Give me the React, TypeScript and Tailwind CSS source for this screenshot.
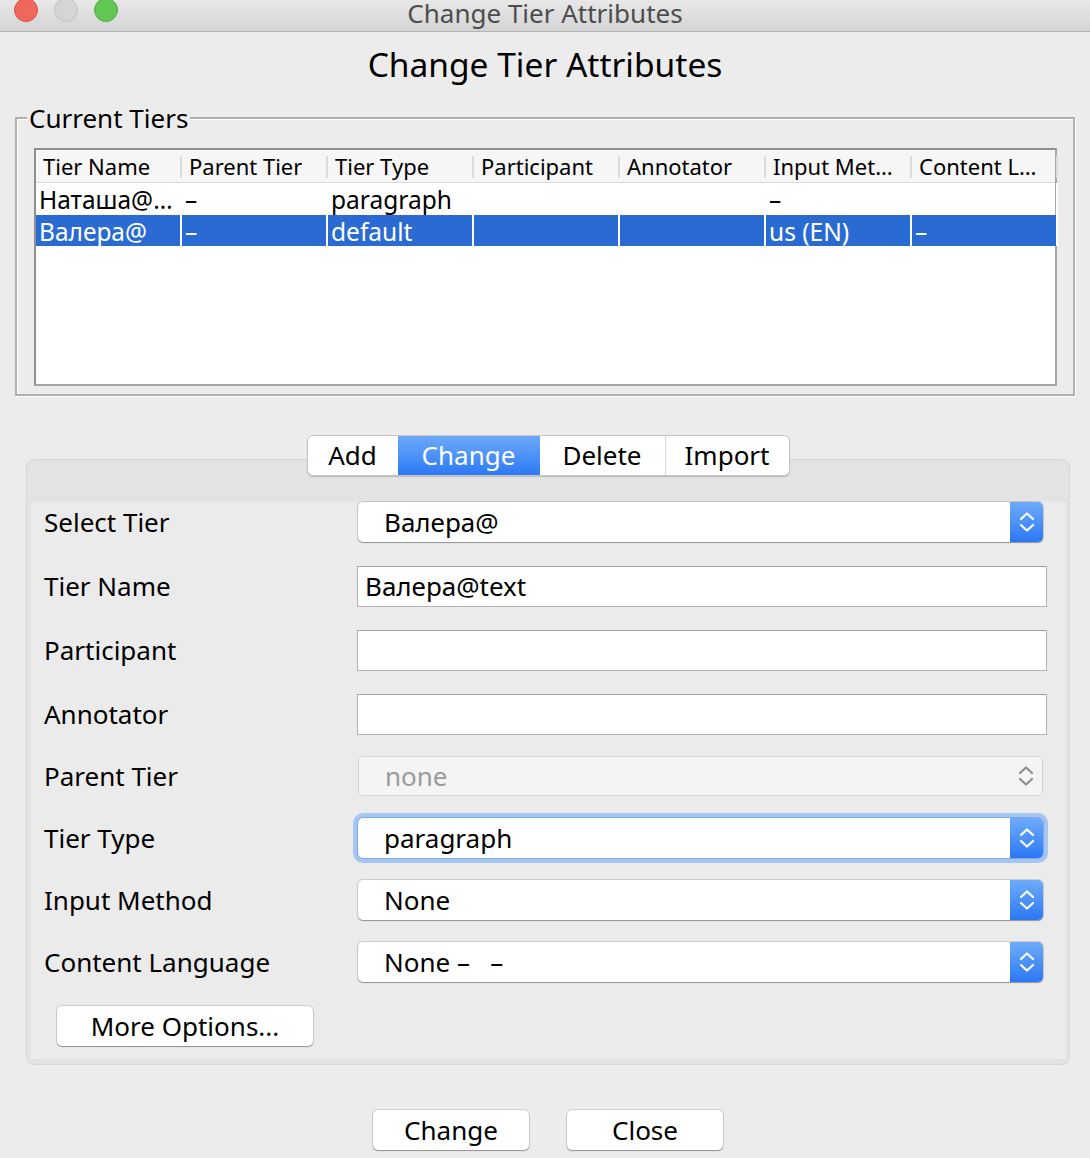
import React from "react";

const columns = [
  "Tier Name",
  "Parent Tier",
  "Tier Type",
  "Participant",
  "Annotator",
  "Input Met…",
  "Content L…",
];

const rows = [
  { cells: ["Наташа@…", "–", "paragraph", "", "", "–", ""], selected: false, h: "h-[32px]" },
  { cells: ["Валера@", "–", "default", "", "", "us (EN)", "–"], selected: true, h: "h-[31px]" },
];

const Chevrons = ({ color }: { color: string }) => (
  <svg width="16" height="24" viewBox="0 0 16 24" fill="none" stroke={color} strokeWidth="2.2" strokeLinecap="round" strokeLinejoin="round">
    <path d="M2 9 L8 3.5 L14 9" />
    <path d="M2 15 L8 20.5 L14 15" />
  </svg>
);

const Select = ({ value, disabled, focused }: { value: string; disabled?: boolean; focused?: boolean }) => {
  if (disabled) {
    return (
      <div className="ml-[1px] mr-[4px] flex h-[40px] items-center rounded-[5px] border border-[#d4d4d4] bg-[#f4f4f4]">
        <span className="flex-1 pl-[26px] text-[#9b9b9b]">{value}</span>
        <div className="flex w-[32px] items-center justify-center">
          <Chevrons color="#8d8d8d" />
        </div>
      </div>
    );
  }
  return (
    <div
      className={
        "ml-[1px] mr-[4px] flex h-[40px] items-center rounded-[5px] bg-white " +
        (focused
          ? "shadow-[0_0_0_1px_#7fa9e6,0_0_0_5px_#a4c6f1]"
          : "shadow-[0_0_0_1px_rgba(0,0,0,0.13),0_1px_1px_rgba(0,0,0,0.28)]")
      }
    >
      <span className="flex-1 whitespace-pre pl-[26px] text-black">{value}</span>
      <div className="flex h-full w-[33px] items-center justify-center rounded-r-[5px] bg-gradient-to-b from-[#6eabf9] to-[#2a77f4]">
        <Chevrons color="#ffffff" />
      </div>
    </div>
  );
};

const TextField = ({ value }: { value: string }) => (
  <div className="flex h-[41px] items-center border border-[#b3b3b3] border-t-[#a2a2a2] bg-white pl-[7px] text-black">
    {value}
  </div>
);

const formRows = [
  { label: "Select Tier", mt: "mt-[10px]", control: <Select value="Валера@" /> },
  { label: "Tier Name", mt: "mt-[24px]", control: <TextField value="Валера@text" /> },
  { label: "Participant", mt: "mt-[23px]", control: <TextField value="" /> },
  { label: "Annotator", mt: "mt-[23px]", control: <TextField value="" /> },
  { label: "Parent Tier", mt: "mt-[21px]", control: <Select value="none" disabled /> },
  { label: "Tier Type", mt: "mt-[22px]", control: <Select value="paragraph" focused /> },
  { label: "Input Method", mt: "mt-[22px]", control: <Select value="None" /> },
  { label: "Content Language", mt: "mt-[22px]", control: <Select value="None –   –" /> },
];

const Button = ({ label, w }: { label: string; w: string }) => (
  <div
    className={
      w +
      " flex h-[40px] items-center justify-center rounded-[5px] bg-white text-black shadow-[0_0_0_1px_rgba(0,0,0,0.12),0_1px_1px_rgba(0,0,0,0.3)]"
    }
  >
    {label}
  </div>
);

export default function App() {
  return (
    <div className="h-[1158px] w-[1090px] overflow-hidden bg-[#ececec] font-['Noto_Sans','Open_Sans',sans-serif] text-[26px] text-black">
      {/* title bar */}
      <div className="relative flex h-[32px] items-start justify-center border-b border-[#b3b3b3] bg-gradient-to-b from-[#e8e8e8] to-[#d4d4d4]">
        <div className="absolute left-[14px] top-[-2px] flex gap-[16px]">
          <div className="h-[24px] w-[24px] rounded-full border border-[#dc5147] bg-[#f0675c]" />
          <div className="h-[24px] w-[24px] rounded-full border border-[#c3c3c3] bg-[#d5d5d5]" />
          <div className="h-[24px] w-[24px] rounded-full border border-[#4fae40] bg-[#62c654]" />
        </div>
        <span className="leading-[26px] text-[#4d4d4d]">Change Tier Attributes</span>
      </div>

      {/* heading */}
      <div className="pt-[10px] text-center text-[33.5px] leading-[44px]">Change Tier Attributes</div>

      {/* current tiers group */}
      <div className="relative mx-[15px] mt-[31px] border-2 border-[#b0b0b0] pb-[8px] pl-[17px] pr-[16px] pt-[29px] shadow-[inset_1px_1px_0_#fff,1px_1px_0_#fff]">
        <span className="absolute left-[10px] top-[-14px] bg-[#ececec] px-[2px] leading-[26px]">Current Tiers</span>
        <div className="h-[238px] border-2 border-[#a6a6a6] border-l-[#8f8f8f] border-t-[#8f8f8f] bg-white">
          <div className="grid h-[33px] grid-cols-[repeat(7,146px)] border-b border-[#dadada] bg-[#f6f6f6] text-[22px]">
            {columns.map((c) => (
              <div key={c} className="flex items-center pl-[7px]">
                <span className="truncate">{c}</span>
                <div className="ml-auto h-[22px] w-[2px] shrink-0 bg-[#dcdcdc]" />
              </div>
            ))}
          </div>
          {rows.map((r, i) => (
            <div key={i} className={"grid grid-cols-[repeat(7,146px)] text-[24.5px] leading-[28px] " + r.h}>
              {r.cells.map((c, j) => (
                <div
                  key={j}
                  className={
                    "flex items-center overflow-hidden border-r-2 border-white pl-[3px] " +
                    (r.selected ? "bg-[#2a6bd3] text-white" : "text-black")
                  }
                >
                  <span className="whitespace-nowrap pt-[2px]">{c}</span>
                </div>
              ))}
            </div>
          ))}
        </div>
      </div>

      {/* tabs + panel */}
      <div className="mx-[26px] mt-[39px] mr-[20px]">
        <div className="relative z-10 flex justify-center">
          <div className="flex h-[41px] overflow-hidden rounded-[6px] border border-[#c4c4c4] bg-white shadow-[0_1px_1px_rgba(0,0,0,0.18)]">
            <div className="flex w-[90px] items-center justify-center">Add</div>
            <div className="flex w-[142px] items-center justify-center bg-gradient-to-b from-[#6ca9f9] to-[#2c79f5] text-white">Change</div>
            <div className="flex w-[125px] items-center justify-center">Delete</div>
            <div className="flex w-[124px] items-center justify-center border-l border-[#d3d3d3]">Import</div>
          </div>
        </div>
        <div className="-mt-[17px] rounded-[8px] border border-[#d7d7d7] bg-[#e3e3e3] pb-[5px] pl-[4px] pr-[3px] pt-[32px]">
          <div className="bg-[#ebebeb] pb-[13px] pl-[13px] pr-[19px]">
            {formRows.map((r) => (
              <div key={r.label} className={"flex items-center " + r.mt}>
                <div className="w-[313px] shrink-0">{r.label}</div>
                <div className="flex-1">{r.control}</div>
              </div>
            ))}
            <div className="ml-[13px] mt-[24px]">
              <Button label="More Options..." w="w-[256px]" />
            </div>
          </div>
        </div>
      </div>

      {/* bottom buttons */}
      <div className="mt-[45px] flex justify-center gap-[38px] pl-[6px]">
        <Button label="Change" w="w-[156px]" />
        <Button label="Close" w="w-[156px]" />
      </div>
    </div>
  );
}
